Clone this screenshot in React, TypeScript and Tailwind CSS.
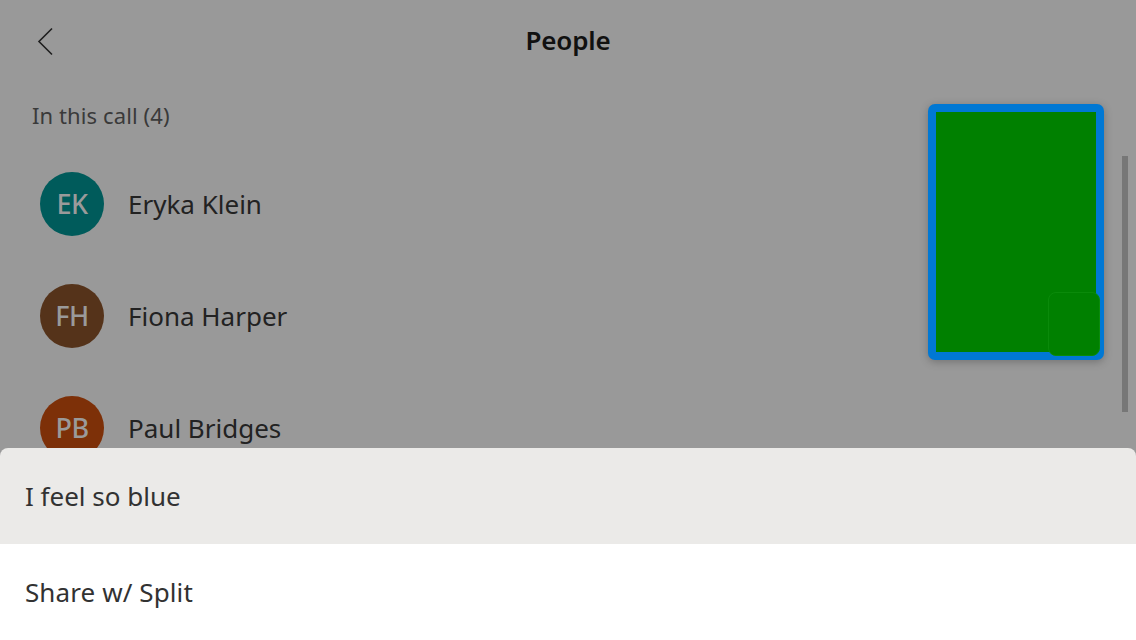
import React from "react";

const people = [
  { initials: "EK", name: "Eryka Klein", color: "bg-[#005b5b]" },
  { initials: "FH", name: "Fiona Harper", color: "bg-[#55331a]" },
  { initials: "PB", name: "Paul Bridges", color: "bg-[#7d3008]" },
];

export default function App() {
  return (
    <div
      className="relative w-[1136px] h-[640px] overflow-hidden flex flex-col bg-[#999999]"
      style={{ fontFamily: '"Noto Sans", "Open Sans", sans-serif' }}
    >
      <div className="relative flex-1 overflow-hidden">
        <div className="relative h-[82px] flex items-center justify-center">
          <svg
            className="absolute left-[37px] top-[27px]"
            width="17"
            height="29"
            viewBox="0 0 17 29"
            fill="none"
          >
            <path d="M15 1.5 L2 14.5 L15 27.5" stroke="#1f1f1f" strokeWidth="1.6" />
          </svg>
          <div className="text-[26px] font-semibold text-[#111111] tracking-[-0.2px] -mt-[2px]">People</div>
        </div>
        <div className="pl-[32px] pt-[19px] text-[22px] leading-[28px] text-[#3a3a3a] tracking-[0.1px]">
          In this call (4)
        </div>
        <div className="mt-[19px] flex flex-col">
          {people.map((p) => (
            <div key={p.name} className="h-[112px] flex items-center pl-[40px] gap-[25px]">
              <div
                className={`w-[64px] h-[64px] rounded-full ${p.color} flex items-center justify-center text-[27px] font-medium text-[#9a9a9a] tracking-[-0.5px]`}
              >
                {p.initials}
              </div>
              <div className="text-[26px] text-[#222222] -ml-[1px]">{p.name}</div>
            </div>
          ))}
        </div>

        <div className="absolute left-[928px] top-[104px] w-[176px] h-[256px] rounded-[7px] bg-[#0078d4] p-[8px] shadow-[0_2px_8px_rgba(0,0,0,0.25)]">
          <div className="w-full h-full bg-[#008000]" />
          <div className="absolute left-[120px] top-[188px] w-[52px] h-[64px] rounded-[8px] bg-[#008000] border border-[#0a8a0a]" />
        </div>
        <div className="absolute left-[1122px] top-[156px] w-[6px] h-[256px] bg-[#777777]" />
      </div>

      <div className="bg-[#999999]">
        <div className="h-[96px] rounded-t-[8px] bg-[#ebeae8] flex items-center pl-[25px] text-[26px] text-[#323232]">
          I feel so blue
        </div>
        <div className="h-[96px] bg-white flex items-center pl-[25px] text-[26px] text-[#323232] tracking-[0.1px]">
          Share w/ Split
        </div>
      </div>
    </div>
  );
}
